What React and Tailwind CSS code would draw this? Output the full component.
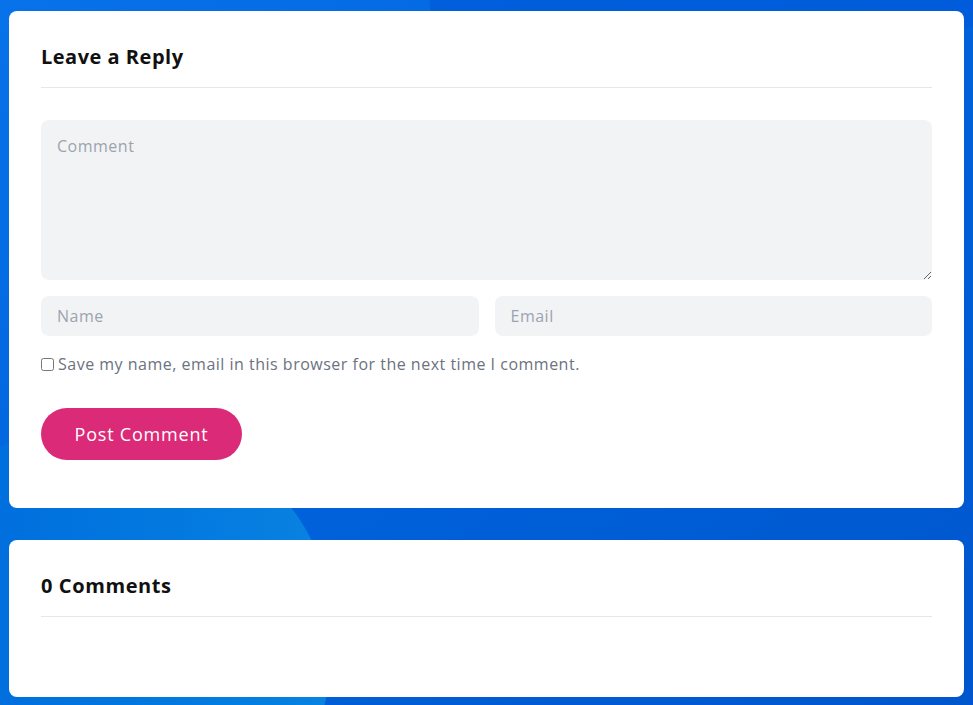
import { useState } from "react";

export default function App() {
  const [form, setForm] = useState({ comment: "", name: "", email: "", save: false });

  const handleChange = (e) => {
    const { name, value, type, checked } = e.target;
    setForm((prev) => ({ ...prev, [name]: type === "checkbox" ? checked : value }));
  };

  return (
    <div
      className="relative min-h-[705px] overflow-hidden bg-gradient-to-br from-[#0872ea] via-[#0062dc] to-[#0056cc] px-[9px] pt-[11px] pb-2 text-[#111] [font-family:'Open_Sans',sans-serif]"
    >
      {/* background shapes */}
      <div className="absolute left-[-120px] top-[430px] h-[420px] w-[450px] rounded-[45%] bg-gradient-to-r from-[#0068dc] to-[#0a86e2] opacity-90" />
      <div className="absolute left-[430px] top-[-40px] h-[80px] w-[600px] -rotate-3 bg-[#005ad8] opacity-70" />

      <div className="relative flex flex-col gap-8">
        {/* Leave a Reply */}
        <form className="rounded-lg bg-white px-8 pt-8 pb-12" onSubmit={(e) => e.preventDefault()}>
          <h3 className="border-b border-gray-200 pb-4 text-[20px] font-bold leading-7 tracking-[0.5px]">Leave a Reply</h3>

          <textarea
            name="comment"
            value={form.comment}
            onChange={handleChange}
            placeholder="Comment"
            className="mt-8 block h-40 w-full rounded-lg bg-[#f2f3f5] px-4 py-3.5 text-[16px] leading-6 tracking-[0.5px] placeholder-[#9ca3af] outline-none"
          />

          <div className="mt-4 grid grid-cols-2 gap-4">
            <input
              type="text"
              name="name"
              value={form.name}
              onChange={handleChange}
              placeholder="Name"
              className="h-10 rounded-lg bg-[#f2f3f5] px-4 text-[16px] tracking-[0.5px] placeholder-[#9ca3af] outline-none"
            />
            <input
              type="email"
              name="email"
              value={form.email}
              onChange={handleChange}
              placeholder="Email"
              className="h-10 rounded-lg bg-[#f2f3f5] px-4 text-[16px] tracking-[0.5px] placeholder-[#9ca3af] outline-none"
            />
          </div>

          <label className="mt-4 flex items-center gap-1 text-[16px] leading-6 tracking-[0.5px] text-[#6b7280]">
            <input type="checkbox" name="save" checked={form.save} onChange={handleChange} className="h-[13px] w-[13px]" />
            Save my name, email in this browser for the next time I comment.
          </label>

          <button
            type="submit"
            className="mt-8 h-[52px] w-[201px] rounded-full bg-[#db2a78] text-[18px] tracking-[0.8px] text-white"
          >
            Post Comment
          </button>
        </form>

        {/* Comments */}
        <div className="rounded-lg bg-white px-8 pt-8 pb-20">
          <h3 className="border-b border-gray-200 pb-4 text-[20px] font-bold leading-7 tracking-[0.6px]">0 Comments</h3>
        </div>
      </div>
    </div>
  );
}
